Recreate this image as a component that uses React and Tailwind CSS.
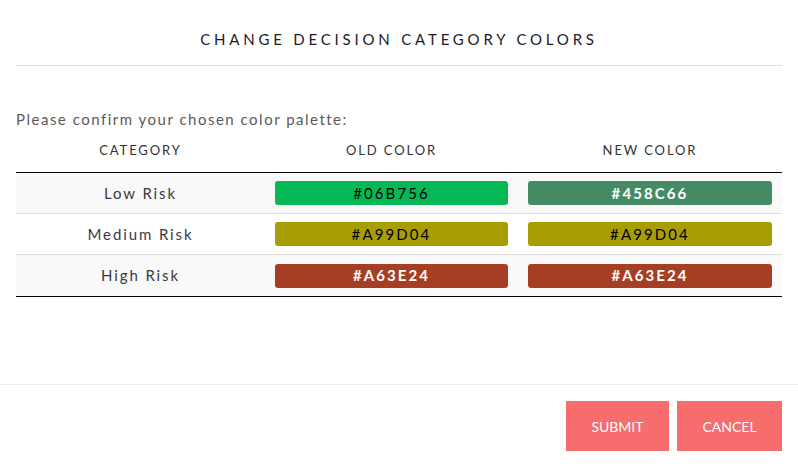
import React from 'react';

const rows = [
  { name: 'Low Risk', old: '#06B756', oldBg: 'bg-[#06b756]', oldText: 'text-black', next: '#458C66', nextBg: 'bg-[#458c66]', nextText: 'text-white font-bold', bg: 'bg-[#f9f9f9]' },
  { name: 'Medium Risk', old: '#A99D04', oldBg: 'bg-[#a99d04]', oldText: 'text-black', next: '#A99D04', nextBg: 'bg-[#a99d04]', nextText: 'text-black', bg: 'bg-white' },
  { name: 'High Risk', old: '#A63E24', oldBg: 'bg-[#a63e24]', oldText: 'text-white font-bold', next: '#A63E24', nextBg: 'bg-[#a63e24]', nextText: 'text-white font-bold', bg: 'bg-[#f9f9f9]' },
];

const App = () => {
  return (
    <div className="w-[798px] h-[467px] bg-white font-['Lato','Open_Sans',sans-serif] flex flex-col">
      <div className="px-4">
        <h1 className="h-[66px] flex items-center justify-center border-b border-[#dcdcdc] text-[15px] tracking-[3.8px] text-[#1b1b2a] pt-[14px]">
          CHANGE DECISION CATEGORY COLORS
        </h1>
        <p className="mt-[43px] text-[15px] tracking-[1.5px] text-[#5a5a5a] leading-5">
          Please confirm your chosen color palette:
        </p>
        <div className="grid grid-cols-[249px_253px_264px] h-[44px] items-center text-[13px] tracking-[1.9px] text-[#333] border-b border-black">
          <div className="text-center">CATEGORY</div>
          <div className="text-center">OLD COLOR</div>
          <div className="text-center">NEW COLOR</div>
        </div>
        <div className="border-b border-black">
          {rows.map((r, i) => (
            <div
              key={r.name}
              className={`grid grid-cols-[249px_253px_264px] h-[41px] items-center ${r.bg} ${i < rows.length - 1 ? 'border-b border-[#dddddd]' : ''}`}
            >
              <div className="text-center text-[15px] tracking-[1.9px] text-[#3a3a40]">{r.name}</div>
              <div className="px-[10px]">
                <div className={`h-6 rounded-[3px] flex items-center justify-center text-[15px] tracking-[2.1px] ${r.oldBg} ${r.oldText}`}>{r.old}</div>
              </div>
              <div className="px-[10px]">
                <div className={`h-6 rounded-[3px] flex items-center justify-center text-[15px] tracking-[2.1px] ${r.nextBg} ${r.nextText}`}>{r.next}</div>
              </div>
            </div>
          ))}
        </div>
      </div>
      <div className="mt-[87px] border-t border-[#ececec] flex justify-end gap-2 pr-4 pt-4">
        <button className="w-[103px] h-[50px] bg-[#f76c6c] text-white text-[14px]">SUBMIT</button>
        <button className="w-[105px] h-[50px] bg-[#f76c6c] text-white text-[14px]">CANCEL</button>
      </div>
    </div>
  );
};

export default App;
